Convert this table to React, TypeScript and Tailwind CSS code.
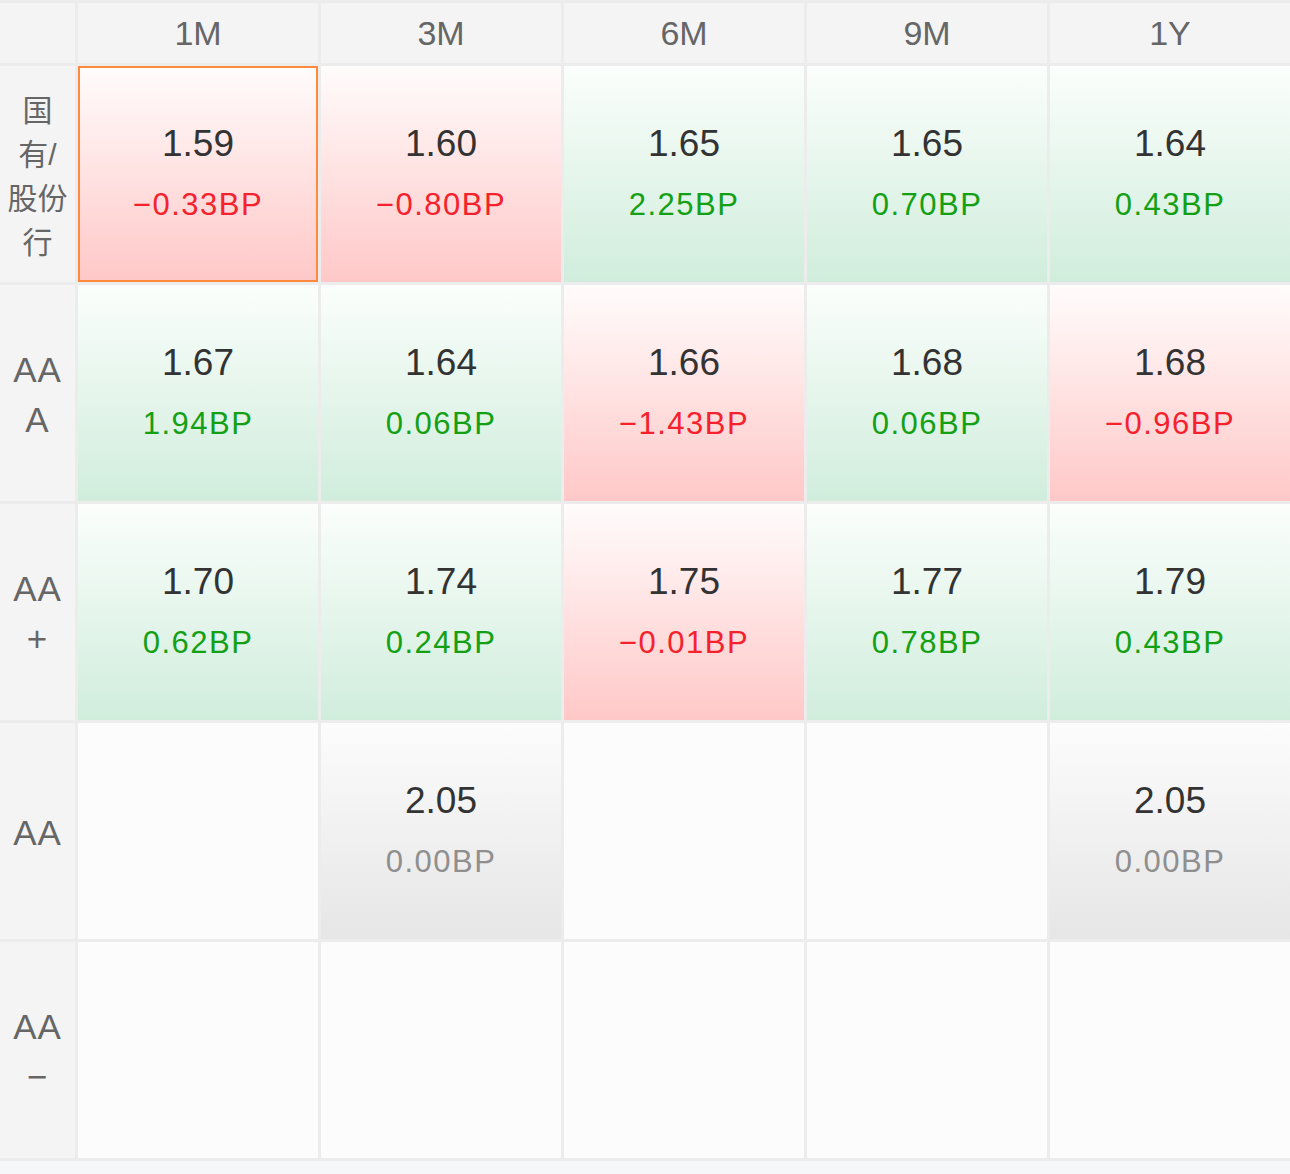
import React from 'react';

type Tone = 'up' | 'down' | 'flat';

interface Quote {
  value: string;
  change: string;
  tone: Tone;
}

const periods = ['1M', '3M', '6M', '9M', '1Y'];

const rows: { label: React.ReactNode; cjk?: boolean; cells: (Quote | null)[] }[] = [
  {
    label: (
      <>
        国<br />有/<br />股份<br />行
      </>
    ),
    cjk: true,
    cells: [
      { value: '1.59', change: '−0.33BP', tone: 'down' },
      { value: '1.60', change: '−0.80BP', tone: 'down' },
      { value: '1.65', change: '2.25BP', tone: 'up' },
      { value: '1.65', change: '0.70BP', tone: 'up' },
      { value: '1.64', change: '0.43BP', tone: 'up' },
    ],
  },
  {
    label: (
      <>
        AA<br />A
      </>
    ),
    cells: [
      { value: '1.67', change: '1.94BP', tone: 'up' },
      { value: '1.64', change: '0.06BP', tone: 'up' },
      { value: '1.66', change: '−1.43BP', tone: 'down' },
      { value: '1.68', change: '0.06BP', tone: 'up' },
      { value: '1.68', change: '−0.96BP', tone: 'down' },
    ],
  },
  {
    label: (
      <>
        AA<br />+
      </>
    ),
    cells: [
      { value: '1.70', change: '0.62BP', tone: 'up' },
      { value: '1.74', change: '0.24BP', tone: 'up' },
      { value: '1.75', change: '−0.01BP', tone: 'down' },
      { value: '1.77', change: '0.78BP', tone: 'up' },
      { value: '1.79', change: '0.43BP', tone: 'up' },
    ],
  },
  {
    label: <>AA</>,
    cells: [
      null,
      { value: '2.05', change: '0.00BP', tone: 'flat' },
      null,
      null,
      { value: '2.05', change: '0.00BP', tone: 'flat' },
    ],
  },
  {
    label: (
      <>
        AA<br />−
      </>
    ),
    cells: [null, null, null, null, null],
  },
];

const cellBg: Record<Tone, string> = {
  down: 'bg-gradient-to-b from-[#fffcfc] to-[#ffc8c8]',
  up: 'bg-gradient-to-b from-[#fbfefc] to-[#d0eddc]',
  flat: 'bg-gradient-to-b from-[#fcfcfc] to-[#e6e6e6]',
};

const changeColor: Record<Tone, string> = {
  down: 'text-[#f5222d]',
  up: 'text-[#14a014]',
  flat: 'text-[#8f8f8f]',
};

const Cell: React.FC<{ quote: Quote | null; selected?: boolean }> = ({ quote, selected }) => {
  if (!quote) return <div className="bg-[#fcfcfc]" />;
  return (
    <div
      className={`flex flex-col items-center justify-center ${cellBg[quote.tone]} ${
        selected ? 'border-2 border-[#ff8a3d]' : ''
      }`}
    >
      <span className="text-[37px] leading-[44px] text-[#333333] -mt-[2px]">{quote.value}</span>
      <span className={`text-[31px] leading-[40px] mt-[19px] tracking-[1.5px] ${changeColor[quote.tone]}`}>
        {quote.change}
      </span>
    </div>
  );
};

export default function App() {
  return (
    <div
      className="min-h-screen bg-[#f6f7f8]"
      style={{ fontFamily: '"Liberation Sans", "Noto Sans CJK SC", sans-serif' }}
    >
      <div className="grid grid-cols-[75px_repeat(5,240px)] grid-rows-[60px_repeat(5,216px)] gap-[3px] bg-[#ececec] py-[3px]">
        <div className="bg-[#f4f4f4]" />
        {periods.map((p) => (
          <div key={p} className="flex items-center justify-center bg-[#f4f4f4] text-[34px] text-[#666666]">
            {p}
          </div>
        ))}

        {rows.map((row, ri) => (
          <React.Fragment key={ri}>
            <div
              className={`flex items-center justify-center bg-[#f4f4f4] text-center text-[#666666] ${
                row.cjk ? 'text-[30px] leading-[44px] pt-[6px]' : 'text-[35px] leading-[50px] tracking-[1px] pt-[3px]'
              }`}
            >
              <div>{row.label}</div>
            </div>
            {row.cells.map((c, ci) => (
              <Cell key={ci} quote={c} selected={ri === 0 && ci === 0} />
            ))}
          </React.Fragment>
        ))}
      </div>
    </div>
  );
}
